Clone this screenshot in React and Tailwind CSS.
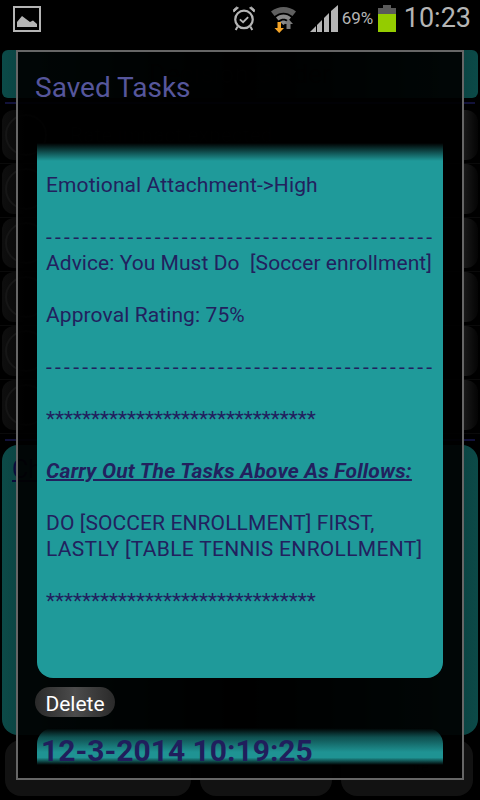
const lines = [
  "Emotional Attachment->High",
  "",
  "#-------------------------------------------",
  "%Advice: You Must Do  [Soccer enrollment]",
  "",
  "Approval Rating: 75%",
  "",
  "#-------------------------------------------",
  "",
  "$******************************",
  "",
  "@Carry Out The Tasks Above As Follows:",
  "",
  "DO [SOCCER ENROLLMENT] FIRST,",
  "^LASTLY [TABLE TENNIS ENROLLMENT]",
  "",
  "$******************************",
];

function Knob() {
  return (
    <div className="relative flex h-[50px] w-[48px] items-center justify-center rounded-xl bg-gradient-to-r from-[#0e0e0e] to-[#050505]">
      <div className="h-[42px] w-[42px] rounded-full border-2 border-[#161616]" />
    </div>
  );
}

function Row({ label }) {
  return (
    <div className="flex h-[54px] items-start gap-[20px] border-b border-[#0a0a0a] pl-[2px]">
      <Knob />
      <span className="flex-1 pt-[12px] text-[21px] leading-[26px] text-[#0a0a0a]">{label}</span>
      <div className="mr-[2px] h-[50px] w-[14px] rounded-r-xl bg-gradient-to-r from-[#1a1a1a] to-[#050505]" />
    </div>
  );
}

function StatusBar() {
  return (
    <div className="flex h-[50px] items-center pb-[13px] pl-[13px] pr-[9px]">
      <svg width="28" height="26" viewBox="0 0 28 26">
        <rect x="1" y="1" width="26" height="24" fill="none" stroke="#b5b5b5" strokeWidth="2" />
        <path d="M4 21V16L9 10L13 13L17 16L20 14.5L24 18V21Z" fill="#b5b5b5" />
      </svg>
      <div className="flex-1" />
      <svg width="24" height="27" viewBox="0 0 26 28">
        <circle cx="13" cy="15" r="9.5" fill="none" stroke="#b5b5b5" strokeWidth="2.4" />
        <path d="M8.5 15L12 18L17.5 12.5" fill="none" stroke="#b5b5b5" strokeWidth="2" />
        <path d="M2 7L7 2.5L5 1.5L1.5 4.5ZM24 7L19 2.5L21 1.5L24.5 4.5Z" fill="#b5b5b5" stroke="#b5b5b5" />
        <path d="M6 23L4 26.5M20 23L22 26.5" stroke="#b5b5b5" strokeWidth="2.2" />
      </svg>
      <svg className="ml-[14px]" width="27" height="28" viewBox="0 0 27 28">
        <path d="M1 6.5C8 0.5 19 0.5 26 6.5L22.5 11C17 6.5 10 6.5 4.5 11Z" fill="#5f5f5f" />
        <path d="M6 12.5C10 8.5 17 8.5 21 12.5L18.5 15.5C15.5 13 11.5 13 8.5 15.5Z" fill="#8a8a8a" />
        <path d="M10 17C12 15 15 15 17 17L13.5 20Z" fill="#8a8a8a" />
        <path d="M16.5 24V19H14L18.5 14L23 19H20.5V24Z" fill="#7a7a7a" />
        <path d="M7.5 17H11V23H14L9.2 28L4.5 23H7.5Z" fill="#f4a428" />
      </svg>
      <svg className="ml-[13px]" width="28" height="27" viewBox="0 0 28 27">
        <path d="M0 27L6 21V27Z" fill="#b5b5b5" />
        <path d="M7 20L12 15V27H7Z" fill="#b5b5b5" />
        <path d="M14 13L19 8V27H14Z" fill="#b5b5b5" />
        <path d="M21 6L28 0V27H21Z" fill="#b5b5b5" />
      </svg>
      <span className="ml-[4px] w-[31px] text-[17px] leading-none text-[#b5b5b5]">69%</span>
      <div className="ml-[5px] flex h-[27px] w-[18px] flex-col items-center">
        <div className="h-[3px] w-[8px] bg-[#5a5a5a]" />
        <div className="h-[6px] w-full bg-[#5a5a5a]" />
        <div className="w-full flex-1 bg-[#94cc00]" />
      </div>
      <span className="ml-[8px] text-[27px] leading-none text-[#b5b5b5]">10:23</span>
    </div>
  );
}

export default function App() {
  return (
    <div className="relative h-[800px] w-[480px] overflow-hidden bg-black font-['Roboto',sans-serif]">
      <StatusBar />
      <div className="mx-[2px] flex h-[48px] items-center justify-center rounded-md bg-gradient-to-r from-[#0b4a48] via-[#020606] to-[#0b4a48]">
        <span className="text-[26px] text-[#0a0a0a]">Decision Guider</span>
      </div>
      <div className="mx-[5px] mt-[4px] h-[2px] bg-[#12123a]" />
      <div className="mt-[6px]">
        <Row label="Rate impact expected" />
        <Row label="" />
        <Row label="" />
        <Row label="" />
        <Row label="" />
        <Row label="" />
      </div>
      <div className="mx-[5px] mt-[5px] h-[2px] bg-[#12123a]" />
      <div className="mx-[2px] mt-[4px] h-[290px] rounded-2xl bg-gradient-to-r from-[#0c4a48] via-[#020606] to-[#0c4a48] pl-[10px] pt-[6px]">
        <span className="text-[25px] text-[#0a0a3a] underline">Ch</span>
      </div>
      <div className="mt-[5px] flex h-[56px] gap-[9px] pl-[5px] pr-[7px]">
        <div className="flex w-[186px] items-start justify-start rounded-2xl bg-[#121212] pl-[44px] pt-[16px] text-[15px] text-[#080808]">Get</div>
        <div className="w-[132px] rounded-2xl bg-[#121212]" />
        <div className="flex flex-1 items-start justify-end rounded-2xl bg-[#121212] pr-[44px] pt-[16px] text-[15px] text-[#080808]">ore</div>
      </div>

      <div className="absolute left-[16px] top-[50px] flex h-[730px] w-[448px] flex-col border-2 border-[#666666] bg-black/90">
        <div className="h-[91px] pl-[17px] pt-[18px] text-[28px] leading-[36px] text-[#56569c]">Saved Tasks</div>
        <div className="relative mx-[19px] h-[535px] rounded-b-2xl bg-[#1f9a9a] pl-[9px] pt-[29px] text-[21px] leading-[26px] tracking-[0.1px] text-[#22215e]">
          <div className="absolute inset-x-0 top-0 h-[18px] bg-gradient-to-b from-black to-transparent" />
          {lines.map((l, i) => {
            if (l.startsWith("@"))
              return <div key={i} className="whitespace-pre font-bold italic tracking-[0.2px] underline decoration-[1.5px]">{l.slice(1)}</div>;
            if (l.startsWith("#"))
              return <div key={i} className="h-[26px] whitespace-pre tracking-[3.25px]">{l.slice(1)}</div>;
            if (l.startsWith("$"))
              return <div key={i} className="h-[26px] whitespace-pre tracking-[-0.05px]">{l.slice(1)}</div>;
            if (l.startsWith("%"))
              return <div key={i} className="h-[26px] whitespace-pre tracking-[0.05px]">{l.slice(1)}</div>;
            if (l.startsWith("^"))
              return <div key={i} className="h-[26px] whitespace-pre tracking-[0.3px]">{l.slice(1)}</div>;
            return <div key={i} className="h-[26px] whitespace-pre">{l}</div>;
          })}
        </div>
        <button className="ml-[17px] mt-[9px] h-[30px] w-[80px] rounded-full bg-gradient-to-r from-[#2a2a2a] via-[#4c4c4c] to-[#2a2a2a] text-[21px] leading-[34px] text-white">
          Delete
        </button>
        <div className="mx-[19px] mt-[11px] h-[37px] whitespace-nowrap rounded-t-2xl bg-[linear-gradient(to_bottom,#000,#0f5050_25%,#1f9393_65%,#1f9393_80%,#000)] pl-[4px] pt-[8px] text-[30px] font-bold leading-[29px] text-[#201e5c]">
          12-3-2014 10:19:25
        </div>
      </div>
    </div>
  );
}
